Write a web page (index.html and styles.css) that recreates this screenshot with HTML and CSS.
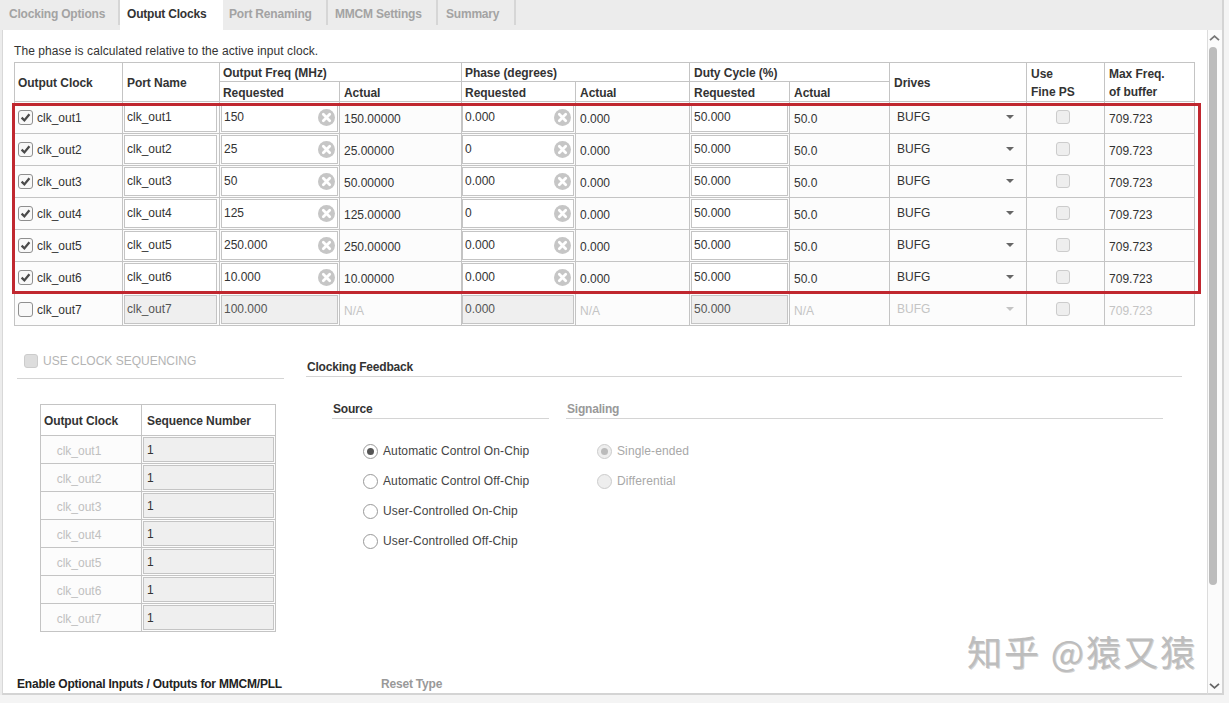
FILE: index.html
```html
<!DOCTYPE html>
<html lang="en">
<head>
<meta charset="utf-8">
<title>Output Clocks</title>
<link rel="stylesheet" href="styles.css">
</head>
<body>
<svg class="defs" width="0" height="0" aria-hidden="true">
  <symbol id="clear" viewBox="0 0 16 16"><circle cx="8" cy="8" r="8" fill="#c6c6c6"/><path d="M5 5l6 6M11 5l-6 6" stroke="#fff" stroke-width="2.6" stroke-linecap="round"/></symbol>
  <symbol id="check" viewBox="0 0 13 13"><path d="M2.6 6.6l2.8 2.8 5-6.2" fill="none" stroke="#4a4a4a" stroke-width="2.3"/></symbol>
</svg>
<div class="window">
  <nav class="tabs">
    <span class="tab">Clocking Options</span>
    <span class="tab active">Output Clocks</span>
    <span class="tab">Port Renaming</span>
    <span class="tab">MMCM Settings</span>
    <span class="tab">Summary</span>
  </nav>
  <div class="body">
    <main class="content">
      <p class="note">The phase is calculated relative to the active input clock.</p>
      <div class="table-wrap">
        <table class="clocks">
          <colgroup>
            <col class="c1"><col class="c2"><col class="c3"><col class="c4"><col class="c5"><col class="c6"><col class="c7"><col class="c8"><col class="c9"><col class="c10"><col class="c11">
          </colgroup>
          <thead>
            <tr class="h1">
              <th rowspan="2" class="tight">Output Clock</th>
              <th rowspan="2">Port Name</th>
              <th colspan="2" class="tight">Output Freq (MHz)</th>
              <th colspan="2" class="tight">Phase (degrees)</th>
              <th colspan="2">Duty Cycle (%)</th>
              <th rowspan="2">Drives</th>
              <th rowspan="2" class="two">Use<br>Fine PS</th>
              <th rowspan="2" class="two">Max Freq.<br>of buffer</th>
            </tr>
            <tr class="h2">
              <th class="tight">Requested</th><th>Actual</th><th class="tight">Requested</th><th>Actual</th><th>Requested</th><th>Actual</th>
            </tr>
          </thead>
          <tbody>
            <tr>
              <td><label class="clk"><span class="box"><svg><use href="#check"/></svg></span>clk_out1</label></td>
              <td><div class="field">clk_out1</div></td>
              <td><div class="field">150<svg class="x"><use href="#clear"/></svg></div></td>
              <td class="val">150.00000</td>
              <td><div class="field">0.000<svg class="x"><use href="#clear"/></svg></div></td>
              <td class="val">0.000</td>
              <td><div class="field">50.000</div></td>
              <td class="val">50.0</td>
              <td><div class="drive">BUFG<i class="caret"></i></div></td>
              <td><span class="box off"></span></td>
              <td class="val">709.723</td>
            </tr>
            <tr>
              <td><label class="clk"><span class="box"><svg><use href="#check"/></svg></span>clk_out2</label></td>
              <td><div class="field">clk_out2</div></td>
              <td><div class="field">25<svg class="x"><use href="#clear"/></svg></div></td>
              <td class="val">25.00000</td>
              <td><div class="field">0<svg class="x"><use href="#clear"/></svg></div></td>
              <td class="val">0.000</td>
              <td><div class="field">50.000</div></td>
              <td class="val">50.0</td>
              <td><div class="drive">BUFG<i class="caret"></i></div></td>
              <td><span class="box off"></span></td>
              <td class="val">709.723</td>
            </tr>
            <tr>
              <td><label class="clk"><span class="box"><svg><use href="#check"/></svg></span>clk_out3</label></td>
              <td><div class="field">clk_out3</div></td>
              <td><div class="field">50<svg class="x"><use href="#clear"/></svg></div></td>
              <td class="val">50.00000</td>
              <td><div class="field">0.000<svg class="x"><use href="#clear"/></svg></div></td>
              <td class="val">0.000</td>
              <td><div class="field">50.000</div></td>
              <td class="val">50.0</td>
              <td><div class="drive">BUFG<i class="caret"></i></div></td>
              <td><span class="box off"></span></td>
              <td class="val">709.723</td>
            </tr>
            <tr>
              <td><label class="clk"><span class="box"><svg><use href="#check"/></svg></span>clk_out4</label></td>
              <td><div class="field">clk_out4</div></td>
              <td><div class="field">125<svg class="x"><use href="#clear"/></svg></div></td>
              <td class="val">125.00000</td>
              <td><div class="field">0<svg class="x"><use href="#clear"/></svg></div></td>
              <td class="val">0.000</td>
              <td><div class="field">50.000</div></td>
              <td class="val">50.0</td>
              <td><div class="drive">BUFG<i class="caret"></i></div></td>
              <td><span class="box off"></span></td>
              <td class="val">709.723</td>
            </tr>
            <tr>
              <td><label class="clk"><span class="box"><svg><use href="#check"/></svg></span>clk_out5</label></td>
              <td><div class="field">clk_out5</div></td>
              <td><div class="field">250.000<svg class="x"><use href="#clear"/></svg></div></td>
              <td class="val">250.00000</td>
              <td><div class="field">0.000<svg class="x"><use href="#clear"/></svg></div></td>
              <td class="val">0.000</td>
              <td><div class="field">50.000</div></td>
              <td class="val">50.0</td>
              <td><div class="drive">BUFG<i class="caret"></i></div></td>
              <td><span class="box off"></span></td>
              <td class="val">709.723</td>
            </tr>
            <tr>
              <td><label class="clk"><span class="box"><svg><use href="#check"/></svg></span>clk_out6</label></td>
              <td><div class="field">clk_out6</div></td>
              <td><div class="field">10.000<svg class="x"><use href="#clear"/></svg></div></td>
              <td class="val">10.00000</td>
              <td><div class="field">0.000<svg class="x"><use href="#clear"/></svg></div></td>
              <td class="val">0.000</td>
              <td><div class="field">50.000</div></td>
              <td class="val">50.0</td>
              <td><div class="drive">BUFG<i class="caret"></i></div></td>
              <td><span class="box off"></span></td>
              <td class="val">709.723</td>
            </tr>
            <tr class="disabled">
              <td><label class="clk"><span class="box"></span>clk_out7</label></td>
              <td><div class="field grey">clk_out7</div></td>
              <td><div class="field grey">100.000</div></td>
              <td class="val">N/A</td>
              <td><div class="field grey">0.000</div></td>
              <td class="val">N/A</td>
              <td><div class="field grey">50.000</div></td>
              <td class="val">N/A</td>
              <td><div class="drive">BUFG<i class="caret"></i></div></td>
              <td><span class="box off"></span></td>
              <td class="val">709.723</td>
            </tr>
          </tbody>
        </table>
        <div class="highlight"></div>
      </div>
      <div class="lower">
        <section class="seq">
          <div class="seq-head"><span class="seq-box"></span>USE CLOCK SEQUENCING</div>
          <table class="seq-table">
            <thead><tr><th>Output Clock</th><th>Sequence Number</th></tr></thead>
            <tbody>
              <tr><td>clk_out1</td><td><div class="num">1</div></td></tr>
              <tr><td>clk_out2</td><td><div class="num">1</div></td></tr>
              <tr><td>clk_out3</td><td><div class="num">1</div></td></tr>
              <tr><td>clk_out4</td><td><div class="num">1</div></td></tr>
              <tr><td>clk_out5</td><td><div class="num">1</div></td></tr>
              <tr><td>clk_out6</td><td><div class="num">1</div></td></tr>
              <tr><td>clk_out7</td><td><div class="num">1</div></td></tr>
            </tbody>
          </table>
        </section>
        <section class="feedback">
          <h3 class="title">Clocking Feedback</h3>
          <div class="fb-cols">
            <div class="source">
              <h3 class="title">Source</h3>
              <div class="radios">
                <div class="radio on"><i></i>Automatic Control On-Chip</div>
                <div class="radio"><i></i>Automatic Control Off-Chip</div>
                <div class="radio"><i></i>User-Controlled On-Chip</div>
                <div class="radio"><i></i>User-Controlled Off-Chip</div>
              </div>
            </div>
            <div class="signaling">
              <h3 class="title dim">Signaling</h3>
              <div class="radios">
                <div class="radio on dis"><i></i>Single-ended</div>
                <div class="radio dis"><i></i>Differential</div>
              </div>
            </div>
          </div>
        </section>
      </div>
      <div class="bottom">
        <h3 class="title optional">Enable Optional Inputs / Outputs for MMCM/PLL</h3>
        <h3 class="title dim reset">Reset Type</h3>
      </div>
      <div class="watermark">知乎 @猿又猿</div>
    </main>
    <aside class="scrollbar">
      <svg class="arrow" width="11" height="6" viewBox="0 0 11 6"><path d="M1 5.2l4.5-4 4.5 4" fill="none" stroke="#777" stroke-width="1.8"/></svg>
      <div class="track"><div class="thumb"></div></div>
      <svg class="arrow" width="11" height="6" viewBox="0 0 11 6"><path d="M1 .8l4.5 4 4.5-4" fill="none" stroke="#666" stroke-width="1.8"/></svg>
    </aside>
  </div>
</div>
</body>
</html>
```
FILE: styles.css
```css
* { box-sizing: border-box; }
html, body { margin: 0; height: 100%; overflow: hidden; }
body {
  background: #f4f4f4;
  font-family: "Liberation Sans", Arial, sans-serif;
  font-size: 12px;
  color: #333;
}
.defs { position: absolute; }
.window {
  width: 1224px;
  height: 695px;
  display: flex;
  flex-direction: column;
  border-right: 2px solid #d4d4d4;
  background: #ececec;
}

.tabs { height: 30px; flex: none; display: flex; background: #ececec; }
.tab {
  height: 25px;
  padding-top: 7px;
  font-size: 12px;
  letter-spacing: -0.2px;
  font-weight: bold;
  color: #a3a3a3;
  border-right: 2px solid #d6d6d6;
  white-space: nowrap;
  flex: none;
}
.tab:nth-child(1) { width: 120px; padding-left: 9px; }
.tab:nth-child(2) { width: 103px; padding-left: 7px; }
.tab:nth-child(3) { width: 105px; padding-left: 6px; }
.tab:nth-child(4) { width: 110px; padding-left: 7px; }
.tab:nth-child(5) { width: 78px; padding-left: 8px; }
.tab.active { height: 30px; background: #fff; color: #333; border-right: 0; }

.body { flex: 1; display: flex; height: 665px; padding-left: 2px; }
.content {
  position: relative;
  width: 1205px;
  height: 665px;
  background: #fff;
  overflow: hidden;
  flex: none;
  border-left: 1px solid #d8d8d8;
  border-bottom: 2px solid #d4d4d4;
}
.note { margin: 0; padding: 14px 0 0 11px; height: 32px; line-height: 14px; letter-spacing: 0.08px; }

.table-wrap { position: relative; margin-left: 11px; width: 1181px; }
table { border-collapse: collapse; table-layout: fixed; }
.clocks { width: 1180px; }
.c1 { width: 108px; } .c2 { width: 97px; } .c3 { width: 120px; } .c4 { width: 122px; }
.c5 { width: 114px; } .c6 { width: 114px; } .c7 { width: 100px; } .c8 { width: 100px; }
.c9 { width: 137px; } .c10 { width: 78px; } .c11 { width: 90px; }
.clocks th, .clocks td { border: 1px solid #c4c4c4; padding: 0; }
.clocks th {
  text-align: left;
  padding-left: 4px;
  font-weight: bold;
  color: #333;
  background: #fff;
  letter-spacing: -0.05px;
}
.clocks th.tight { padding-left: 3px; }
.clocks th[rowspan] { padding-top: 2px; }
.clocks th.two { line-height: 18px; }
.h1 { height: 19px; }
.h1 th[colspan] { padding-top: 1px; }
.h2 { height: 20px; }
.h2 th { padding-top: 2px; }
.clocks tbody tr { height: 32px; background: #fcfcfc; }
.clocks td { vertical-align: middle; }
.clk { display: flex; align-items: center; gap: 4px; padding-left: 3px; }
.box {
  display: inline-block;
  width: 15px;
  height: 15px;
  border: 1px solid #8f8f8f;
  border-radius: 3px;
  background: #f8f8f8;
  flex: none;
}
.box svg { display: block; width: 13px; height: 13px; }
.box.off { display: block; margin: -2px 0 0 29px; width: 14px; height: 14px; background: #eee; border-color: #ccc; }
.field {
  position: relative;
  height: 29px;
  margin: 0 1px;
  border: 1px solid #c4c4c4;
  background: #fff;
  padding: 6px 0 0 2px;
  line-height: 14px;
}
.clocks td:nth-child(2) .field { margin-right: 2px; }
.clocks td:nth-child(5) .field { margin-left: 0; }
.field.grey { background: #efefef; }
.x { position: absolute; right: 2px; top: 5px; width: 17px; height: 17px; }
.val { padding-left: 4px !important; padding-top: 2px !important; }
.drive { position: relative; padding: 0 0 2px 7px; }
.caret {
  position: absolute;
  right: 12px;
  top: 5px;
  border-left: 4px solid transparent;
  border-right: 4px solid transparent;
  border-top: 4px solid #666;
}
.disabled .val, .disabled .drive { color: #c4c4c4; }
.disabled .caret { border-top-color: #c4c4c4; }
.disabled .field { color: #555; }

.highlight {
  position: absolute;
  left: -2px;
  top: 41px;
  width: 1189px;
  height: 191px;
  border: 3px solid #c0272f;
  pointer-events: none;
}

.lower { display: flex; }
.seq { width: 290px; padding: 28px 0 0 14px; flex: none; }
.seq-head {
  display: flex;
  align-items: center;
  gap: 5px;
  height: 25px;
  padding: 0 0 11px 7px;
  width: 267px;
  border-bottom: 1px solid #d4d4d4;
  color: #b4b4b4;
  white-space: nowrap;
}
.seq-box {
  display: block;
  width: 14px;
  height: 14px;
  flex: none;
  background: #ddd;
  border: 1px solid #ccc;
  border-radius: 3px;
}
.seq-table { margin: 25px 0 0 23px; width: 236px; }
.seq-table th, .seq-table td { border: 1px solid #c4c4c4; padding: 0; }
.seq-table th { height: 31px; text-align: left; padding: 2px 0 0 3px; font-weight: bold; letter-spacing: -0.1px; }
.seq-table th:first-child { width: 101px; }
.seq-table th:last-child { padding-left: 5px; }
.seq-table td { height: 28px; background: #fcfcfc; color: #c0c0c0; text-align: center; padding: 2px 24px 0 0; }
.seq-table td:last-child { padding: 0 1px; text-align: left; }
.num {
  height: 25px;
  background: #efefef;
  border: 1px solid #c4c4c4;
  color: #333;
  padding: 5px 0 0 3px;
  line-height: 14px;
}

.feedback { padding: 34px 0 0 13px; width: 890px; }
.title {
  margin: 0;
  font-size: 12px;
  letter-spacing: -0.2px;
  font-weight: bold;
  color: #333;
  line-height: 14px;
  border-bottom: 1px solid #d4d4d4;
  padding: 0 0 2px 1px;
}
.feedback > .title { width: 876px; }
.title.dim { color: #999; }
.fb-cols { display: flex; padding: 25px 0 0 26px; }
.source { width: 217px; }
.signaling { margin-left: 17px; width: 597px; }
.radios { padding-top: 17px; display: flex; flex-direction: column; }
.source .radios { padding-left: 31px; }
.signaling .radios { padding-left: 31px; }
.radio { display: flex; align-items: center; gap: 5px; height: 30px; color: #444; letter-spacing: 0.12px; }
.radio i {
  display: block;
  position: relative;
  width: 15px;
  height: 15px;
  border: 1px solid #999;
  border-radius: 50%;
  background: #fff;
  flex: none;
}
.radio.on i::after {
  content: "";
  position: absolute;
  left: 3px;
  top: 3px;
  width: 7px;
  height: 7px;
  border-radius: 50%;
  background: #555;
}
.radio.dis { color: #a8a8a8; }
.radio.dis i { background: #eee; border-color: #ccc; }
.radio.on.dis i::after { background: #bbb; }

.bottom { position: absolute; left: 14px; top: 647px; display: flex; gap: 17px; }
.bottom .title { padding-left: 0; }
.optional { width: 347px; color: #222; }
.reset { width: 802px; }

.watermark {
  position: absolute;
  left: 964px;
  top: 598px;
  font-family: "Noto Sans CJK SC", sans-serif;
  font-size: 35px;
  letter-spacing: 2px;
  line-height: 46px;
  color: #bdbdbd;
  text-shadow: 1px 1px 0 #d4d4d4;
  white-space: nowrap;
  pointer-events: none;
}

.scrollbar {
  width: 15px;
  height: 665px;
  background: #fbfbfb;
  display: flex;
  flex-direction: column;
  align-items: flex-start;
  padding: 5px 0 4px 1px;
  gap: 6px;
  border-left: 1px solid #dcdcdc;
  border-bottom: 2px solid #d4d4d4;
  flex: none;
}
.track { flex: 1; width: 8px; }
.thumb { height: 538px; border-radius: 4px; background: #bcbcbc; }
.arrow { flex: none; }
```
